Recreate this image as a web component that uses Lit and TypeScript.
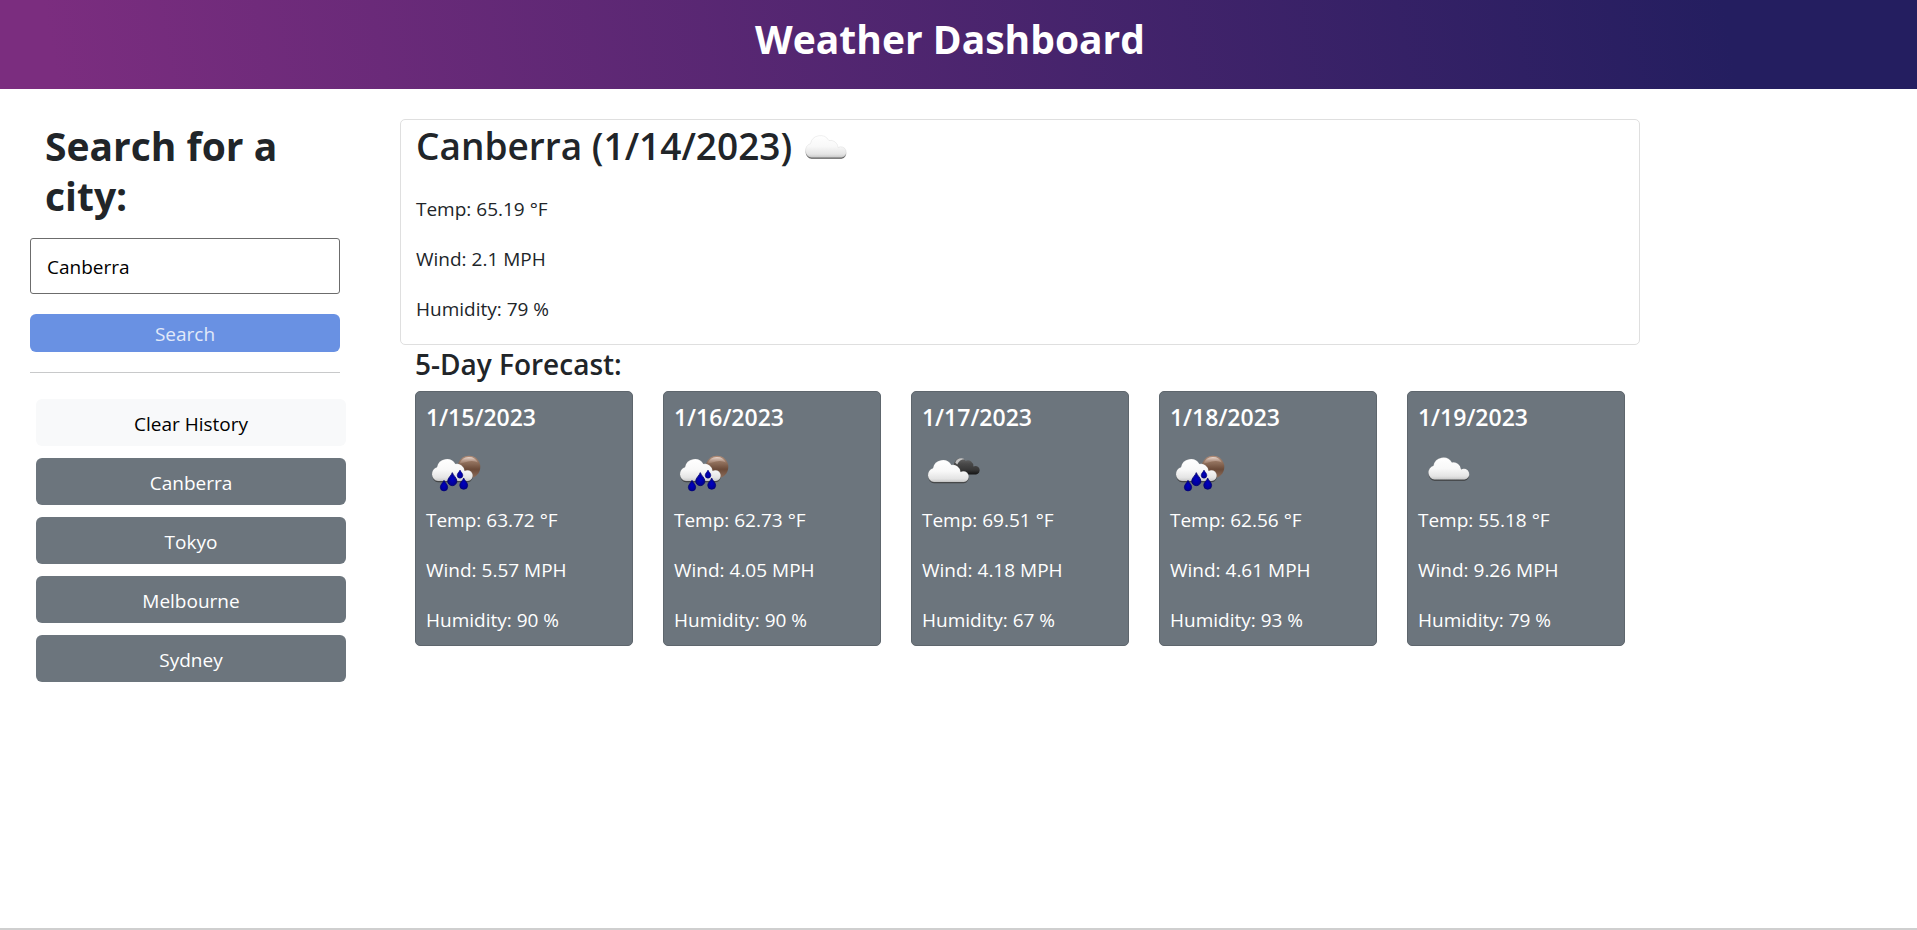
import { LitElement, html, svg, css } from "lit";
import { customElement, property, state } from "lit/decorators.js";

type IconKind = "cloud" | "broken" | "rain";

interface Reading {
  date: string;
  icon: IconKind;
  temp: string;
  wind: string;
  humidity: string;
}

const CURRENT = {
  city: "Canberra",
  date: "1/14/2023",
  icon: "cloud" as IconKind,
  temp: "65.19",
  wind: "2.1",
  humidity: "79",
};

const FORECAST: Reading[] = [
  { date: "1/15/2023", icon: "rain", temp: "63.72", wind: "5.57", humidity: "90" },
  { date: "1/16/2023", icon: "rain", temp: "62.73", wind: "4.05", humidity: "90" },
  { date: "1/17/2023", icon: "broken", temp: "69.51", wind: "4.18", humidity: "67" },
  { date: "1/18/2023", icon: "rain", temp: "62.56", wind: "4.61", humidity: "93" },
  { date: "1/19/2023", icon: "cloud", temp: "55.18", wind: "9.26", humidity: "79" },
];

const CLOUD =
  "M16 37 A6.5 7 0 0 1 15 23.2 A10 10 0 0 1 33.4 20 A7.6 7.6 0 0 1 42.6 27 A5.4 5.4 0 1 1 46 37 Z";
const DARK_CLOUD =
  "M34 32 A6.6 8.5 0 0 1 32 19.5 A6.6 6.6 0 0 1 43 18.4 A5.6 5.6 0 0 1 50.8 24.2 A4.2 4.2 0 1 1 53.5 32 Z";
const DROP = "M0 -6 C1 -3 4.3 -1.2 4.3 2 A4.3 4.3 0 0 1 -4.3 2 C-4.3 -1.2 -1 -3 0 -6 Z";

/** Weather pictogram: overcast, broken clouds or rain. */
@customElement("weather-icon")
export class WeatherIcon extends LitElement {
  @property() kind: IconKind = "cloud";

  static styles = css`
    :host {
      display: block;
      flex: none;
      width: 60px;
      height: 60px;
    }
    svg {
      display: block;
      width: 100%;
      height: 100%;
    }
  `;

  private cloud(x: number, y: number) {
    return svg`
      <g transform="translate(${x} ${y})">
        <path d=${CLOUD} transform="translate(0 1.3)" fill="url(#under)" filter="url(#soft)" />
        <path d=${CLOUD} fill="url(#white)" stroke="#9a9a9a" stroke-opacity=".22" stroke-width=".7" />
      </g>`;
  }

  private drop(x: number, y: number, s: number) {
    return svg`<path d=${DROP} transform="translate(${x} ${y}) scale(${s})"
      fill="url(#water)" stroke="#000070" stroke-width=".8" />`;
  }

  private scene() {
    if (this.kind === "rain") {
      return svg`
        <circle cx="43" cy="25" r="11.3" fill="url(#sun)" />
        <path d="M33.6 21.600 A10 10 0 0 1 52 20.600 Q47 18 42 19.600 Q37 21 33.600 21.600 Z" fill="url(#shine)" />
        ${this.cloud(-4, 2)}
        ${this.drop(34, 32, 0.66)}
        ${this.drop(26.3, 37, 1.06)}
        ${this.drop(18, 43.5, 0.86)}
        ${this.drop(37.7, 41.5, 0.92)}`;
    }
    if (this.kind === "broken") {
      return svg`
        <g transform="translate(.6 .4)">
          <path d=${DARK_CLOUD} fill="url(#dark)" />
          <path d="M32.600 20 A6.4 6.4 0 0 1 42 16.800 Q37 16.800 34.600 22 Z" fill="#d8d8d8" opacity=".85" filter="url(#faint)" />
        </g>
        ${this.cloud(-4, 3)}`;
    }
    return this.cloud(0.5, 0.5);
  }

  render() {
    return html`
      <svg viewBox="0 0 60 60" aria-hidden="true">
        <defs>
          <linearGradient id="white" x1="0" y1="0" x2="0" y2="1">
            <stop offset="0" stop-color="#fff" />
            <stop offset=".5" stop-color="#f8f8f8" />
            <stop offset=".85" stop-color="#e4e4e4" />
            <stop offset="1" stop-color="#c8c8c8" />
          </linearGradient>
          <linearGradient id="under" x1="0" y1="0" x2="0" y2="1">
            <stop offset=".5" stop-color="#333" stop-opacity="0" />
            <stop offset="1" stop-color="#333" stop-opacity=".85" />
          </linearGradient>
          <linearGradient id="dark" x1="0" y1="0" x2="0" y2="1">
            <stop offset="0" stop-color="#666" />
            <stop offset=".35" stop-color="#484848" />
            <stop offset=".7" stop-color="#383838" />
            <stop offset="1" stop-color="#151515" />
          </linearGradient>
          <linearGradient id="sun" x1="0" y1="0" x2="0" y2="1">
            <stop offset="0" stop-color="#b08c78" />
            <stop offset=".35" stop-color="#8a6a56" />
            <stop offset=".6" stop-color="#6b4a38" />
            <stop offset="1" stop-color="#8d6e5c" />
          </linearGradient>
          <linearGradient id="shine" x1="0" y1="0" x2="0" y2="1">
            <stop offset="0" stop-color="#e8d6cc" />
            <stop offset="1" stop-color="#a88673" stop-opacity=".5" />
          </linearGradient>
          <radialGradient id="water">
            <stop offset="0" stop-color="#0000c4" />
            <stop offset="1" stop-color="#000090" />
          </radialGradient>
          <filter id="soft"><feGaussianBlur stdDeviation=".5" /></filter>
          <filter id="faint"><feGaussianBlur stdDeviation=".4" /></filter>
        </defs>
        ${this.scene()}
      </svg>
    `;
  }
}

/** The three measurements shown for the current day and for each forecast day. */
@customElement("weather-readings")
export class WeatherReadings extends LitElement {
  @property() temp = "";
  @property() wind = "";
  @property() humidity = "";

  static styles = css`
    :host {
      display: flex;
      flex-direction: column;
      gap: 20px;
      line-height: 30px;
    }
    p {
      margin: 0;
    }
  `;

  render() {
    return html`
      <p>Temp: ${this.temp} °F</p>
      <p>Wind: ${this.wind} MPH</p>
      <p>Humidity: ${this.humidity} %</p>
    `;
  }
}

@customElement("app-root")
export class AppRoot extends LitElement {
  @state() private query = "Canberra";
  @state() private cities = ["Canberra", "Tokyo", "Melbourne", "Sydney"];

  static styles = css`
    :host {
      display: flex;
      flex-direction: column;
      min-height: 100vh;
      background: #fff;
      color: #212529;
      font-family: "Open Sans", "Noto Sans", sans-serif;
      font-size: 19px;
      line-height: 30px;
    }
    * {
      box-sizing: border-box;
    }
    h1,
    h2,
    h3 {
      margin: 0;
    }
    .banner {
      padding: 15px 17px 26px 0;
      background: linear-gradient(80deg, #7b2d7f 3%, #241e60 90%);
      color: #fff;
      text-align: center;
    }
    .banner h1 {
      font-size: 39px;
      line-height: 48px;
    }
    .layout {
      display: flex;
      flex: 1;
      gap: 60px;
      padding: 30px 27px 30px 30px;
    }
    .side {
      flex: none;
      width: calc(100% / 6);
    }
    .content {
      flex: none;
      width: calc(100% * 2 / 3);
    }
    .prompt {
      display: block;
      margin: 2px 15px 17px;
      font-size: 39px;
      font-weight: 700;
      line-height: 50px;
    }
    input,
    button {
      display: block;
      width: 100%;
      font: inherit;
    }
    input {
      height: 56px;
      padding: 2px 16px 0;
      border: 1px solid #6c6c6c;
      border-radius: 3px;
      color: #000;
    }
    button {
      padding: 2px 12px 0;
      border: 0;
      border-radius: 6px;
      cursor: pointer;
    }
    .search {
      height: 38px;
      margin-top: 20px;
      background: #6991e3;
      color: #e1e9f9;
    }
    .rule {
      height: 1px;
      margin: 20px 0 26px;
      border: 0;
      background: #c8c9ca;
    }
    .history {
      display: grid;
      gap: 12px;
      margin: 0 -6px 0 6px;
    }
    .history button {
      height: 47px;
      background: #6c757d;
      color: #fff;
    }
    .history .clear {
      background: #f8f9fa;
      color: #000;
    }
    .today {
      padding: 0 15px 20px;
      border: 1px solid #dfdfdf;
      border-radius: 5px;
    }
    .today-title {
      display: flex;
      gap: 3px;
      margin-bottom: 14px;
    }
    .today h2 {
      font-size: 37px;
      font-weight: 600;
      line-height: 52px;
    }
    .forecast {
      padding: 0 15px;
    }
    .forecast h3 {
      margin-bottom: 8px;
      font-size: 28px;
      font-weight: 600;
      line-height: 38px;
    }
    .days {
      display: grid;
      grid-template-columns: repeat(5, 1fr);
      gap: 30px;
    }
    .day {
      padding: 11px 10px 10px;
      border: 1px solid #5e666d;
      border-radius: 5px;
      background: #6c757d;
      color: #fff;
    }
    .day h4 {
      margin: 0 0 11px;
      font-size: 23px;
      font-weight: 600;
      line-height: 28px;
    }
    .day weather-icon {
      margin-bottom: 3px;
    }
    .foot {
      height: 2px;
      background: #cfcfcf;
    }
  `;

  private onInput(e: Event) {
    this.query = (e.target as HTMLInputElement).value;
  }

  private onSearch(e: Event) {
    e.preventDefault();
    const city = this.query.trim();
    if (city && !this.cities.includes(city)) this.cities = [city, ...this.cities];
  }

  render() {
    return html`
      <header class="banner"><h1>Weather Dashboard</h1></header>
      <main class="layout">
        <aside class="side">
          <form @submit=${this.onSearch}>
            <label class="prompt" for="city">Search for a city:</label>
            <input id="city" type="text" .value=${this.query} @input=${this.onInput} />
            <button class="search" type="submit">Search</button>
          </form>
          <hr class="rule" />
          <div class="history">
            <button class="clear" type="button" @click=${() => (this.cities = [])}>Clear History</button>
            ${this.cities.map(
              (c) => html`<button type="button" @click=${() => (this.query = c)}>${c}</button>`
            )}
          </div>
        </aside>
        <div class="content">
          <section class="today">
            <div class="today-title">
              <h2>${CURRENT.city} (${CURRENT.date})</h2>
              <weather-icon kind=${CURRENT.icon}></weather-icon>
            </div>
            <weather-readings temp=${CURRENT.temp} wind=${CURRENT.wind} humidity=${CURRENT.humidity}></weather-readings>
          </section>
          <section class="forecast">
            <h3>5-Day Forecast:</h3>
            <div class="days">
              ${FORECAST.map(
                (d) => html`
                  <article class="day">
                    <h4>${d.date}</h4>
                    <weather-icon kind=${d.icon}></weather-icon>
                    <weather-readings temp=${d.temp} wind=${d.wind} humidity=${d.humidity}></weather-readings>
                  </article>
                `
              )}
            </div>
          </section>
        </div>
      </main>
      <footer class="foot"></footer>
    `;
  }
}
